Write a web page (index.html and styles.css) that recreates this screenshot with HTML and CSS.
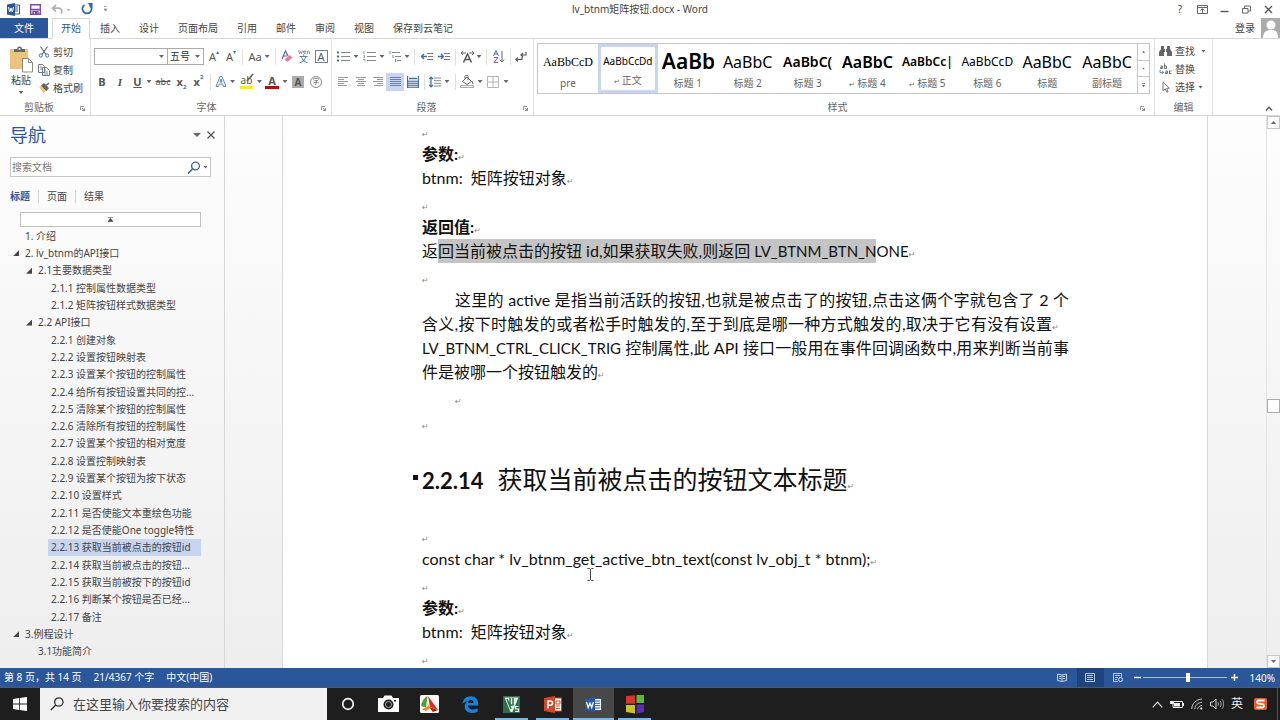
FILE: index.html
```html
<!DOCTYPE html>
<html lang="zh-CN">
<head>
<meta charset="utf-8">
<title>lv_btnm矩阵按钮.docx - Word</title>
<link rel="stylesheet" href="styles.css">
</head>
<body>
<header class="titlebar">
  <div class="quick">
    <svg width="13" height="13" viewBox="0 0 13 13"><path d="M7 2h5.500v9H7z" fill="#fff" stroke="#2b579a"/><path d="M8 4h3M8 6h3M8 8h3" stroke="#2b579a"/><path d="M0 1.500 8 0v13L0 11.500z" fill="#2b579a"/><path d="M1.500 4l1.200 5L4 5l1.300 4L6.500 4" fill="none" stroke="#fff"/></svg>
    <button aria-label="保存"><svg width="11" height="11" viewBox="0 0 11 11"><path d="M.7.7h9.600v9.600H.7zM.7 5.500h9.600M3 10V7.500h5V10" fill="none" stroke="#7d4ba0" stroke-width="1.400"/><path d="M5 8h2v2H5z" fill="#7d4ba0"/></svg></button>
    <button aria-label="撤消"><svg width="20" height="11" viewBox="0 0 20 11"><path d="M5 1 1.500 4.200 5 7.500M2 4.200h5.500c3 0 4 2 3 5.500" fill="none" stroke="#b0b0b0" stroke-width="1.700"/><path d="M15.500 5h4l-2 2z" fill="#b0b0b0"/></svg></button>
    <button aria-label="恢复"><svg width="12" height="12" viewBox="0 0 12 12"><path d="M3.500 2a4.600 4.600 0 1 0 5 0" fill="none" stroke="#2f66b0" stroke-width="1.800"/><path d="M6.500 0h5v5z" fill="#2f66b0"/></svg></button>
    <button aria-label="自定义快速访问工具栏"><svg width="5" height="6" viewBox="0 0 5 6"><path d="M1 .5h3M1 3h3l-1.500 2z" stroke="#888" fill="#888" stroke-width=".7"/></svg></button>
  </div>
  <h1 class="title">lv_btnm矩阵按钮.docx - Word</h1>
  <div class="winbtns">
    <button>?</button>
    <button aria-label="功能区显示选项"><svg width="11" height="9" viewBox="0 0 11 9"><path d="M.5.5h10v8H.500zM.5 2.500h10M5.500 8V4M3.500 5.500l2-2 2 2" fill="none" stroke="#666"/></svg></button>
    <button aria-label="最小化"><svg width="9" height="9" viewBox="0 0 9 9"><path d="M.5 6.500h8" stroke="#555" stroke-width="1.400"/></svg></button>
    <button aria-label="还原"><svg width="9" height="9" viewBox="0 0 9 9"><path d="M.5 3.500h5.500v4.500H.500zM2.500 3V1h6v5H6" fill="none" stroke="#666"/></svg></button>
    <button aria-label="关闭"><svg width="9" height="9" viewBox="0 0 9 9"><path d="M1 1l7 7M8 1 1 8" stroke="#555" stroke-width="1.400"/></svg></button>
  </div>
</header>

<nav class="tabs">
  <button class="file">文件</button>
  <button class="tab on">开始</button>
  <button class="tab">插入</button>
  <button class="tab">设计</button>
  <button class="tab">页面布局</button>
  <button class="tab">引用</button>
  <button class="tab">邮件</button>
  <button class="tab">审阅</button>
  <button class="tab">视图</button>
  <button class="tab">保存到云笔记</button>
  <button class="login">登录</button>
  <svg class="avatar" width="19" height="20" viewBox="0 0 19 20"><path d="M0 0h19v20H0z" fill="#ababab"/><circle cx="10" cy="7" r="4.500" fill="#fff"/><path d="M2 20c0-6 3-8 8-8s7 2 7 8z" fill="#fff"/></svg>
</nav>

<section class="ribbon">
  <div class="group clip">
    <div class="clip-body">
      <button class="paste">
        <svg width="25" height="27" viewBox="0 0 25 27"><path d="M1 3h18v20H1z" fill="#ecc37c"/><path d="M5 6V3h3a2.500 2.500 0 0 1 5 0h3v3z" fill="#666"/><circle cx="10.500" cy="3" r="1" fill="#fff"/><path d="M13.500 12.500h6l4 4v9.500h-10z" fill="#fff" stroke="#888"/><path d="M19.500 12.500v4h4" fill="none" stroke="#888"/></svg>
        <span>粘贴</span><i class="caret"></i>
      </button>
      <div class="stack">
        <button><svg width="12" height="12" viewBox="0 0 12 12"><path d="M2.500.5 8 8.500M9.500.5 4 8.500" stroke="#666" stroke-width="1.200"/><circle cx="2.800" cy="9.500" r="1.600" fill="none" stroke="#4a6ea9"/><circle cx="9.200" cy="9.500" r="1.600" fill="none" stroke="#4a6ea9"/></svg>剪切</button>
        <button><svg width="12" height="12" viewBox="0 0 12 12"><path d="M.5.5h4l2 2v6h-6zM4.500 3.500h4l3 3v5h-7z" fill="#fff" stroke="#777"/><path d="M6 6h2M6 8h4M6 10h4M2 3h2M2 5h2" stroke="#6a8cc0"/></svg>复制</button>
        <button><svg width="12" height="12" viewBox="0 0 12 12"><path d="M1 5l3-1 4 4-2 3.500z" fill="#ecc37c"/><path d="M4 3.500 6 2l4 4-1.500 2zM8 3.500 11 1" fill="#666" stroke="#666" stroke-width="1.500"/></svg>格式刷</button>
      </div>
    </div>
    <div class="glabel">剪贴板<svg class="launch" width="5" height="5" viewBox="0 0 5 5"><path d="M.5 4V.500H4M2 2l2.500 2.500M4.500 2v2.500H2" fill="none" stroke="#777" stroke-width=".8"/></svg></div>
  </div>

  <div class="group font">
    <div class="row f1">
      <div class="combo"><input type="text" aria-label="字体"><i class="caret"></i></div>
      <div class="combo"><select aria-label="字号"><option>五号</option></select><i class="caret"></i></div>
      <button aria-label="增大字号"><span class="ga">A</span><sup>▴</sup></button>
      <button aria-label="减小字号"><span class="ga">A</span><sup>▾</sup></button>
      <i class="sep"></i>
      <button>Aa<i class="caret"></i></button>
      <i class="sep"></i>
      <button aria-label="清除所有格式"><svg width="12" height="13" viewBox="0 0 12 13"><path d="M1 9 4.500 1 7 6M2.500 6h3.500" fill="none" stroke="#5a6f94" stroke-width="1.200"/><path d="M3.500 9.500 8.500 5l3 2.500-5 4.500z" fill="#e8829a"/></svg></button>
      <button aria-label="拼音指南" class="pinyin"><svg width="12" height="4" viewBox="0 0 12 4"><path d="M.5.5l1 3 1-2 1 2 1-3M8 2H5.500c0 2 1.500 1.500 2.300 1.300M8 2C8 .5 5.500.5 5.500 2M9.500 3.800V1h1.200l.8.800v2" fill="none" stroke="#777" stroke-width=".8"/></svg><b>文</b></button>
      <button aria-label="字符边框"><span class="boxed">A</span></button>
    </div>
    <div class="row f2">
      <button class="b">B</button>
      <button class="i">I</button>
      <button class="u">U</button>
      <i class="caret"></i>
      <button class="s">abc</button>
      <button class="b">x<sub>2</sub></button>
      <button class="b">x<sup class="bl">2</sup></button>
      <i class="sep"></i>
      <button aria-label="文本效果"><svg width="12" height="13" viewBox="0 0 12 13"><path d="M1 11.500 5 1.500h2l4 10H8.500l-.8-2.500H4.300l-.8 2.500zM5 7h2L6 4z" fill="#fff" stroke="#5b86c9"/></svg></button>
      <i class="caret"></i>
      <button aria-label="突出显示" class="hl"><span>ab</span><svg width="13" height="12" viewBox="0 0 13 12"><path d="M6 8 12 1" stroke="#666" stroke-width="1.800"/></svg></button>
      <i class="caret"></i>
      <button class="fc">A</button>
      <i class="caret"></i>
      <button><span class="shade">A</span></button>
      <button aria-label="带圈字符"><span class="circ">字</span></button>
    </div>
    <div class="glabel">字体<svg class="launch" width="5" height="5" viewBox="0 0 5 5"><path d="M.5 4V.500H4M2 2l2.500 2.500M4.500 2v2.500H2" fill="none" stroke="#777" stroke-width=".8"/></svg></div>
  </div>

  <div class="group para">
    <div class="row p1">
      <button aria-label="项目符号"><svg width="13" height="11" viewBox="0 0 13 11"><path d="M4 1.500h9M4 5.500h9M4 9.500h9" stroke="#888"/><path d="M0 1.500h2M0 5.500h2M0 9.500h2" stroke="#44679f" stroke-width="2"/></svg></button>
      <i class="caret"></i>
      <button aria-label="编号"><svg width="13" height="11" viewBox="0 0 13 11"><path d="M4 1.500h9M4 5.500h9M4 9.500h9" stroke="#888"/><path d="M1 0v3M.5 4.500h1v2h-1M0 8.500h2v2" fill="none" stroke="#6d88b5" stroke-width=".8"/></svg></button>
      <i class="caret"></i>
      <button aria-label="多级列表"><svg width="13" height="11" viewBox="0 0 13 11"><path d="M3 1.500h8M6 5.500h6M8 9.500h4" stroke="#888"/><path d="M1 0v3M4 4v3M6.500 8v3" stroke="#6d88b5"/></svg></button>
      <i class="caret"></i><i class="sep"></i>
      <button aria-label="减少缩进量"><svg width="12" height="9" viewBox="0 0 12 9"><path d="M6 1.500h6M7 4.500h5M6 7.500h6" stroke="#777"/><path d="M0 4.500h6M3 2 .5 4.500 3 7" fill="none" stroke="#3f6ab5" stroke-width="1.300"/></svg></button>
      <button aria-label="增加缩进量"><svg width="12" height="9" viewBox="0 0 12 9"><path d="M6 1.500h6M7 4.500h5M6 7.500h6" stroke="#777"/><path d="M0 4.500h6M3 2l2.500 2.500L3 7" fill="none" stroke="#3f6ab5" stroke-width="1.300"/></svg></button>
      <i class="sep"></i>
      <button aria-label="中文版式"><svg width="13" height="12" viewBox="0 0 13 12"><path d="M2.500 11.500 6.500 3l4 8.500M4 8.500h5" fill="none" stroke="#555" stroke-width="1.500"/><path d="M0 2h5M2 0 0 2l2 2M8 2h5M11 0l2 2-2 2" fill="none" stroke="#555" stroke-width=".9"/></svg></button>
      <i class="caret"></i><i class="sep"></i>
      <button aria-label="排序"><svg width="12" height="13" viewBox="0 0 12 13"><path d="M.5 6 3 .5 5.500 6M1.500 4h3" fill="none" stroke="#4a6ea9"/><path d="M1 7.500h4L1 12.500h4.300" fill="none" stroke="#7e57a5"/><path d="M9 1v11M6.800 9.500 9 12l2.200-2.500" fill="none" stroke="#666"/></svg></button>
      <i class="sep"></i>
      <button aria-label="显示编辑标记"><svg width="12" height="11" viewBox="0 0 12 11"><path d="M11 1v3H6M8 2 6 4l2 2M7 6v2.500H1M3 6.500.8 8.500 3 10.500" fill="none" stroke="#555" stroke-width="1.200"/></svg></button>
    </div>
    <div class="row p2">
      <button aria-label="左对齐"><svg width="10" height="9" viewBox="0 0 10 9"><path d="M0 .5h10M0 2.500h6M0 4.500h10M0 6.500h6M0 8.500h9" stroke="#999"/></svg></button>
      <button aria-label="居中"><svg width="10" height="9" viewBox="0 0 10 9"><path d="M0 .5h10M2 2.500h6M0 4.500h10M2 6.500h6M1 8.500h8" stroke="#999"/></svg></button>
      <button aria-label="右对齐"><svg width="10" height="9" viewBox="0 0 10 9"><path d="M0 .5h10M4 2.500h6M0 4.500h10M4 6.500h6M1 8.500h9" stroke="#999"/></svg></button>
      <button aria-label="两端对齐" class="sel"><svg width="11" height="10" viewBox="0 0 11 10"><path d="M0 .5h11M0 2.500h11M0 4.500h11M0 6.500h11M0 8.500h11" stroke="#6a7fa5"/></svg></button>
      <button aria-label="分散对齐"><svg width="12" height="12" viewBox="0 0 12 12"><path d="M0 4h12v8H0z" fill="#c3cbd8"/><path d="M.5 0v12M11.500 0v12M2 2.500h8" stroke="#3f6ab5" stroke-width="1.300"/><path d="M1 5.500h10M1 7.500h10M1 9.500h10M1 11.500h10" stroke="#7788a5"/></svg></button>
      <i class="sep"></i>
      <button aria-label="行距"><svg width="12" height="12" viewBox="0 0 12 12"><path d="M5 2h7M5 4.700h7M5 7.300h7M5 10h7" stroke="#888"/><path d="M2 1v10M0 3l2-2 2 2M0 9l2 2 2-2" fill="none" stroke="#3f6ab5" stroke-width="1.200"/></svg></button>
      <i class="caret"></i><i class="sep"></i>
      <button aria-label="底纹"><svg width="14" height="13" viewBox="0 0 14 13"><path d="M2.500 6.500 7 2l4.500 4.500L7 9.500zM5 4V1.500a1.500 1.500 0 0 1 3 0V5M12 6l1 3" fill="none" stroke="#666"/><path d="M.5 10.500h13v2H.500z" fill="#fff" stroke="#aaa"/></svg></button>
      <i class="caret"></i>
      <button aria-label="边框"><svg width="12" height="12" viewBox="0 0 12 12"><path d="M.5.5h11v11H.500zM6 .5v11M.5 6h11" fill="none" stroke="#b5b5b5"/></svg></button>
      <i class="caret"></i>
    </div>
    <div class="glabel">段落<svg class="launch" width="5" height="5" viewBox="0 0 5 5"><path d="M.5 4V.500H4M2 2l2.500 2.500M4.500 2v2.500H2" fill="none" stroke="#777" stroke-width=".8"/></svg></div>
  </div>

  <div class="group styles">
    <div class="gallery">
      <button class="style"><span class="pv serif">AaBbCcD</span><span class="nm">pre</span></button>
      <button class="style cur"><span class="pv s10">AaBbCcDd</span><span class="nm"><em>↵</em>正文</span></button>
      <button class="style"><span class="pv s21 bd">AaBb</span><span class="nm">标题 1</span></button>
      <button class="style"><span class="pv s16">AaBbC</span><span class="nm">标题 2</span></button>
      <button class="style"><span class="pv s14 bd">AaBbC(</span><span class="nm">标题 3</span></button>
      <button class="style"><span class="pv s16 bd">AaBbC</span><span class="nm"><em>↵</em>标题 4</span></button>
      <button class="style"><span class="pv s12 bd">AaBbCc|</span><span class="nm"><em>↵</em>标题 5</span></button>
      <button class="style"><span class="pv s12">AaBbCcD</span><span class="nm">标题 6</span></button>
      <button class="style"><span class="pv s16">AaBbC</span><span class="nm">标题</span></button>
      <button class="style"><span class="pv s16">AaBbC</span><span class="nm">副标题</span></button>
      <div class="gscroll">
        <button aria-label="上一行"><i class="caret up"></i></button>
        <button aria-label="下一行"><i class="caret"></i></button>
        <button aria-label="其他"><i class="caret more"></i></button>
      </div>
    </div>
    <div class="glabel">样式<svg class="launch" width="5" height="5" viewBox="0 0 5 5"><path d="M.5 4V.500H4M2 2l2.500 2.500M4.500 2v2.500H2" fill="none" stroke="#777" stroke-width=".8"/></svg></div>
  </div>

  <div class="group edit">
    <div class="stack">
      <button><svg width="13" height="12" viewBox="0 0 13 12"><path d="M2 1h3v3h3V1h3v3l2 3v4H8V7H5v4H0V7l2-3z" fill="#666"/><path d="M6.500 4v3" stroke="#fff"/></svg>查找<i class="caret"></i></button>
      <button><svg width="13" height="12" viewBox="0 0 13 12"><path d="M1.500 3h2v2.500h-2V4.200h2M5.500.5v5h2V3h-2M6.500 8h2v2.500h-2V9.200h2M12.500 8h-2v2.500h2" fill="none" stroke="#666" stroke-width=".9"/><path d="M1 7v2.500h3M3 8l1.500 1.500L3 11" fill="none" stroke="#4a6ea9" stroke-width=".8"/></svg>替换</button>
      <button><svg width="13" height="12" viewBox="0 0 13 12"><path d="M4 .8v9l2.200-2 1.600 3.500 1.300-.6L7.500 7.300h3z" fill="#fff" stroke="#777"/></svg>选择<i class="caret near"></i></button>
    </div>
    <div class="glabel">编辑</div>
  </div>
  <button class="collapse" aria-label="折叠功能区"><svg width="8" height="5" viewBox="0 0 8 5"><path d="M1 4.500 4 1.200 7 4.500" fill="none" stroke="#555" stroke-width="1.400"/></svg></button>
</section>

<main class="main">
  <aside class="nav">
    <div class="nav-head"><h2>导航</h2><i class="caret big"></i><button aria-label="关闭导航"><svg width="8" height="8" viewBox="0 0 8 8"><path d="M.5.5l7 7M7.500.5l-7 7" stroke="#555" stroke-width="1.300"/></svg></button></div>
    <div class="search"><input type="text" placeholder="搜索文档" aria-label="搜索文档"><svg width="14" height="13" viewBox="0 0 14 13"><circle cx="8.500" cy="5" r="3.900" fill="none" stroke="#3c66ad" stroke-width="1.300"/><path d="M5.500 8 1 12.500" stroke="#3c66ad" stroke-width="1.700"/></svg><i class="caret"></i></div>
    <div class="nav-tabs"><button class="on">标题</button><button>页面</button><button>结果</button></div>
    <button class="top" aria-label="跳转到开头"><svg width="5" height="5" viewBox="0 0 5 5"><path d="M0 .5h5M0 4.500h5L2.500 1.500z" fill="#444" stroke="#444" stroke-width=".6"/></svg></button>
    <ul class="tree">
      <li class="l1">1. 介绍</li>
      <li class="l1 open">2. lv_btnm的API接口</li>
      <li class="l2 open">2.1主要数据类型</li>
      <li class="l3">2.1.1 控制属性数据类型</li>
      <li class="l3">2.1.2 矩阵按钮样式数据类型</li>
      <li class="l2 open">2.2 API接口</li>
      <li class="l3">2.2.1 创建对象</li>
      <li class="l3">2.2.2 设置按钮映射表</li>
      <li class="l3">2.2.3 设置某个按钮的控制属性</li>
      <li class="l3">2.2.4 给所有按钮设置共同的控...</li>
      <li class="l3">2.2.5 清除某个按钮的控制属性</li>
      <li class="l3">2.2.6 清除所有按钮的控制属性</li>
      <li class="l3">2.2.7 设置某个按钮的相对宽度</li>
      <li class="l3">2.2.8 设置控制映射表</li>
      <li class="l3">2.2.9 设置某个按钮为按下状态</li>
      <li class="l3">2.2.10 设置样式</li>
      <li class="l3">2.2.11 是否使能文本重绘色功能</li>
      <li class="l3">2.2.12 是否使能One toggle特性</li>
      <li class="l3 cur">2.2.13 获取当前被点击的按钮id</li>
      <li class="l3">2.2.14 获取当前被点击的按钮...</li>
      <li class="l3">2.2.15 获取当前被按下的按钮id</li>
      <li class="l3">2.2.16 判断某个按钮是否已经...</li>
      <li class="l3">2.2.17 备注</li>
      <li class="l1 open">3.例程设计</li>
      <li class="l2">3.1功能简介</li>
    </ul>
  </aside>
  <div class="work">
    <article class="page">
      <p class="blank ret"></p>
      <p class="ret"><b>参数:</b></p>
      <p class="ret">btnm:&nbsp; 矩阵按钮对象</p>
      <p class="blank ret"></p>
      <p class="ret"><b>返回值:</b></p>
      <p class="ret">返<mark>回当前被点击的按钮 id,如果获取失败,则返回 <span class="id">LV_BTNM_BTN_N</span></mark><span class="id">ONE</span></p>
      <p class="blank ret"></p>
      <p class="just indent">这里的 active 是指当前活跃的按钮,也就是被点击了的按钮,点击这俩个字就包含了 2 个</p>
      <p class="just soft ret">含义,按下时触发的或者松手时触发的,至于到底是哪一种方式触发的,取决于它有没有设置</p>
      <p class="just"><span class="id">LV_BTNM_CTRL_CLICK_TRIG</span> 控制属性,此 API 接口一般用在事件回调函数中,用来判断当前事</p>
      <p class="ret">件是被哪一个按钮触发的</p>
      <p class="blank indent ret"></p>
      <p class="blank ret"></p>
      <h2 class="ret"><b>2.2.14</b>获取当前被点击的按钮文本标题</h2>
      <p class="blank ret"></p>
      <p class="ret">const char * lv_btnm_get_active_btn_text(const lv_obj_t * btnm);</p>
      <p class="blank ret"></p>
      <p class="ret"><b>参数:</b></p>
      <p class="ret">btnm:&nbsp; 矩阵按钮对象</p>
      <p class="blank ret"></p>
    </article>
    <svg class="ibeam" width="7" height="13" viewBox="0 0 7 13"><path d="M.5.5h2l1 1 1-1h2M3.500 1.500v10M.5 12.500h2l1-1 1 1h2" fill="none" stroke="#444"/></svg>
  </div>
  <div class="vscroll">
    <button aria-label="向上滚动"><i class="caret up"></i></button>
    <div class="track"><span class="thumb"></span></div>
    <button aria-label="向下滚动"><i class="caret"></i></button>
  </div>
</main>

<footer class="status">
  <span>第 8 页，共 14 页</span><span>21/4367 个字</span><span>中文(中国)</span>
  <div class="views">
    <button aria-label="阅读视图"><svg width="10" height="9" viewBox="0 0 10 9"><path d="M.5 1 5 2l4.500-1v6.500L5 8.500.5 7.500zM5 2v6.500M2 3.500h2M2 5.500h2M6 3.500h2M6 5.500h2" fill="none" stroke="#c5d4ec"/></svg></button>
    <button aria-label="页面视图" class="on"><svg width="10" height="9" viewBox="0 0 10 9"><path d="M.5.5h9v8h-9zM2 2.500h6M2 4.500h6M2 6.500h6" fill="none" stroke="#b5c8e8"/></svg></button>
    <button aria-label="Web 版式视图"><svg width="10" height="9" viewBox="0 0 10 9"><path d="M5 8.500H.500v-8h8V4M2 2.500h5M2 4.500h3M2 6.500h2" fill="none" stroke="#b5c8e8"/><circle cx="7.500" cy="6.500" r="2" fill="#2b579a" stroke="#dfe8f6"/></svg></button>
  </div>
  <button class="zb" aria-label="缩小"><svg width="7" height="7" viewBox="0 0 7 7"><path d="M0 3.500h7" stroke="#fff" stroke-width="1.400"/></svg></button>
  <input class="zoom" type="range" min="0" max="100" value="54" aria-label="缩放">
  <button class="zb" aria-label="放大"><svg width="7" height="7" viewBox="0 0 7 7"><path d="M0 3.500h7M3.500 0v7" stroke="#fff" stroke-width="1.400"/></svg></button>
  <button class="pct">140%</button>
</footer>

<div class="taskbar">
  <button class="start" aria-label="开始"><svg width="14" height="14" viewBox="0 0 14 14"><path d="M0 2l6-.9v5.500H0zM6.800 1 14 0v6.600H6.800zM0 7.400h6v5.500L0 12zM6.800 7.400H14V14l-7.200-1z" fill="#fff"/></svg></button>
  <div class="tsearch"><svg width="14" height="14" viewBox="0 0 14 14"><circle cx="8.800" cy="5" r="4.200" fill="none" stroke="#333" stroke-width="1.300"/><path d="M5.800 8 .8 13" stroke="#333" stroke-width="1.400"/></svg><input type="text" placeholder="在这里输入你要搜索的内容" aria-label="搜索"></div>
  <div class="apps">
    <button aria-label="Cortana"><svg width="14" height="14" viewBox="0 0 14 14"><circle cx="7" cy="7" r="5.300" fill="none" stroke="#fff" stroke-width="1.700"/></svg></button>
    <button aria-label="相机"><svg width="21" height="18" viewBox="0 0 21 18"><path d="M0 3h5l1.500-2.500h7L15 3h6v14H0z" fill="#fff"/><circle cx="10.500" cy="9.500" r="5" fill="#1e1e1e"/><circle cx="10.500" cy="9.500" r="3" fill="none" stroke="#ccc" stroke-width=".8"/><path d="M16 5h2v1.500h-2z" fill="#1e1e1e"/></svg></button>
    <button aria-label="录屏"><svg width="19" height="18" viewBox="0 0 19 18"><rect width="19" height="18" rx="1.500" fill="#f6f6f4"/><path d="M7.500 1C4 3 1.500 7 1 11l5 1.500z" fill="#48a23c"/><path d="M8 1l10 14-8-3z" fill="#e02c1c"/><path d="M2 14.500l6-3.500-1-4 3 6-4 3z" fill="#f28a1c"/><path d="M9 12l9 3-5 2z" fill="#b81810"/></svg></button>
    <button aria-label="Edge"><svg width="17" height="17" viewBox="0 0 17 17"><path d="M.5 8C1 3 4.500.3 8.800.3c5 0 7.700 3.700 7.500 9.200H6c.2 3 2.500 4 4.800 4 2 0 3.500-.5 4.800-1.300v3.500c-1.500.8-3.300 1.200-5.500 1.200-5 0-7.500-3-7.500-6.500 0-2.500 1.500-4.500 3.500-5.500C3.500 5.500 1.500 6.500.5 8zM6 7h5.500c0-2-1-3.200-2.700-3.200S6.200 5 6 7z" fill="#1783dc"/></svg></button>
    <button class="run" aria-label="VisualGDB"><svg width="17" height="17" viewBox="0 0 17 17"><path d="M0 0h17v17H0z" fill="#2d6e4c"/><path d="M1.500 1.500h14L9.500 16H7.500z" fill="#e8f2ec"/><path d="M4 3l4 10M7 2v7h3V2" fill="none" stroke="#2d6e4c" stroke-width="1.500"/><path d="M15.500 10.500h-3v2.500h3v2.500h-3.500" fill="none" stroke="#fff" stroke-width="1.200"/></svg></button>
    <button class="run" aria-label="PowerPoint"><svg width="18" height="17" viewBox="0 0 18 17"><path d="M10 2h7.500v13H10z" fill="#fff" stroke="#d04727"/><path d="M12 5h4v3h-4zM12 10h4M12 12.500h4" stroke="#d04727" fill="none"/><path d="M0 2l11-2v17L0 15z" fill="#d04727"/><path d="M4 12.500V5h2.500a2 2 0 0 1 0 4.200H4" fill="none" stroke="#fff" stroke-width="1.600"/></svg></button>
    <button class="run cur" aria-label="Word"><svg width="17" height="15" viewBox="0 0 17 15"><path d="M9 1.500h7.500v12H9z" fill="#fff" stroke="#2b579a"/><path d="M10 4h5M10 6.300h5M10 8.600h5M10 11h5" stroke="#2b579a"/><path d="M0 1.800 10 0v15L0 13.200z" fill="#2b579a"/><path d="M1.500 5l1.700 5.500L5 6l1.700 4.500L8.400 5" fill="none" stroke="#fff" stroke-width="1.300"/></svg></button>
    <button class="run" aria-label="桌面工具"><svg width="18" height="19" viewBox="0 0 18 19"><path d="M0 1l9-.8v8.600H0z" fill="#d8362c"/><path d="M10.500 0H18v8h-7.500z" fill="#5cb832"/><path d="M0 10h9v8.500L0 17z" fill="#c9c428"/><path d="M10.500 9.500H18V17l-7.500 1.500z" fill="#5a2cb4"/></svg></button>
  </div>
  <div class="tray">
    <button aria-label="显示隐藏的图标"><svg width="11" height="7" viewBox="0 0 11 7"><path d="M.7 6.300 5.500 1.200l4.800 5.100" fill="none" stroke="#ddd" stroke-width="1.200"/></svg></button>
    <button aria-label="电池"><svg width="14" height="9" viewBox="0 0 14 9"><path d="M3 1.500h9.500v6H3zM13.500 3v3" fill="none" stroke="#eee"/><path d="M4 3h6v3.500H4zM0 1h4v3H0z" fill="#eee"/></svg></button>
    <button aria-label="网络"><svg width="12" height="12" viewBox="0 0 12 12"><path d="M.7 11C1 5.500 5 1.500 11 1M3.700 11.200C4 7.500 7 4.500 11 4.200M6.700 11.200c.2-2 2-3.700 4.300-3.800" fill="none" stroke="#ccc"/><circle cx="10.300" cy="10.500" r="1.100" fill="#fff"/></svg></button>
    <button aria-label="音量"><svg width="14" height="12" viewBox="0 0 14 12"><path d="M.6 4h2.200L6 1v10L2.800 8H.600z" fill="none" stroke="#ddd"/><path d="M8 4.300c.8 1 .8 2.400 0 3.400M10 2.800c1.600 2 1.600 4.400 0 6.400M12 1.200c2.300 3 2.300 6.600 0 9.600" fill="none" stroke="#bbb" stroke-width=".9"/></svg></button>
    <button class="ime">英</button>
    <button aria-label="搜狗输入法"><svg width="13" height="12" viewBox="0 0 13 12"><rect width="13" height="12" rx="2" fill="#ea5a2c"/><path d="M10.500 2.500H4.500c-2 0-2 3 0 3.200l4 .5c2 .3 2 3.300 0 3.300H2.500" fill="none" stroke="#fff" stroke-width="1.800"/></svg></button>
  </div>
</div>
</body>
</html>
```
FILE: styles.css
```css
* { box-sizing: border-box; }
body {
  margin: 0;
  height: 100vh;
  display: flex;
  flex-direction: column;
  overflow: hidden;
  font: 10px/16px "Noto Sans", "Noto Sans CJK SC", sans-serif;
  color: #444;
  background: #fff;
}
button, input, select { font: inherit; color: inherit; border: 0; background: none; padding: 0; margin: 0; border-radius: 0; }
button { display: flex; align-items: center; justify-content: center; white-space: nowrap; }
h1, h2, p, ul { margin: 0; padding: 0; font-weight: normal; }
svg { flex: none; display: block; }
.caret { flex: none; width: 5px; height: 3px; background: #666; clip-path: polygon(0 0, 100% 0, 50% 100%); justify-self: center; align-self: center; }
.caret.up { clip-path: polygon(50% 0, 100% 100%, 0 100%); }
.caret.big { width: 8px; height: 4px; }
.caret.more { height: 5px; clip-path: polygon(0 0, 100% 0, 100% 20%, 0 20%, 0 45%, 100% 45%, 50% 100%, 0 45%); }

/* title bar */
.titlebar { display: grid; grid-template-columns: 1fr auto 1fr; align-items: center; height: 18px; flex: none; }
.quick { display: flex; align-items: center; gap: 10px; padding-left: 7px; }
.title { font-size: 10px; line-height: 18px; }
.winbtns { display: flex; justify-content: flex-end; gap: 12px; padding-right: 7px; }
.winbtns button { width: 10px; }

/* tabs */
.tabs { display: flex; align-items: stretch; height: 21px; flex: none; gap: 1px; border-bottom: 1px solid #d8d8d8; }
.file { width: 48px; background: #2b579a; color: #fff; margin-right: 3px; }
.tab { padding: 0 9px; }
.tab.on { color: #2b579a; background: #fff; border: 1px solid #d8d8d8; border-bottom: 0; padding: 0 8px 2px; height: 21px; }
.login { margin-left: auto; margin-right: 5px; }

/* ribbon */
.ribbon { display: flex; flex: none; height: 77px; border-bottom: 1px solid #d5d5d5; }
.group { display: flex; flex-direction: column; padding-top: 5px; border-right: 1px solid #e2e2e2; }
.glabel { margin-top: auto; display: flex; justify-content: center; position: relative; line-height: 16px; color: #666; }
.launch { position: absolute; right: 5px; bottom: 4px; }
.clip { width: 91px; padding-top: 4px; }
.clip .glabel { padding-right: 12px; }
.clip-body { display: flex; gap: 4px; padding-left: 8px; }
.paste { flex-direction: column; width: 26px; }
.paste span { line-height: 14px; }
.paste .caret { margin-top: 4px; }
.stack { display: flex; flex-direction: column; }
.stack button { height: 18px; gap: 3px; justify-content: flex-start; }
.stack .caret { margin-left: 3px; }
.stack .near { margin-left: 0; }
.clip .stack { height: 54px; }
.row { display: grid; align-items: center; height: 25px; }
.row button { height: 18px; }
.row .sep { width: 1px; height: 16px; background: #e0e0e0; justify-self: center; }
.font { width: 241px; padding-left: 3px; }
.font .row { justify-content: start; color: #555; }
.font .glabel { padding-right: 12px; }
.f1 { grid-template-columns: 73px 38px 18px 16px 7px 26px 7px 16px 17px 18px; }
.f2 { grid-template-columns: 16px 20px 15px 8px 20px 17px 17px 7px 14px 9px 19px 7px 18px 8px 18px 18px; }
.combo { display: flex; align-items: center; height: 17px; border: 1px solid #ababab; padding-right: 3px; margin-right: -1px; }
.combo input { flex: 1; min-width: 0; }
.combo select { flex: 1; appearance: none; padding-left: 2px; color: #333; height: 15px; line-height: 15px; }
.f1 .combo + .combo { margin-right: 1px; }
.f1 button { font-size: 11px; }
.f1 button .caret { margin-left: 3px; }
.f1 sup, .f2 sup, .f2 sub { font-size: 6px; line-height: 8px; color: #3f6ab5; }
.f1 sup { align-self: flex-start; }
.f2 sup.bl { align-self: flex-start; }
.f2 sub { align-self: flex-end; }
.pinyin { flex-direction: column; }
.pinyin b { font-size: 9px; line-height: 10px; font-weight: normal; color: #3f6ab5; }
.boxed { border: 1px solid #6a7fa5; width: 13px; height: 13px; line-height: 11px; }
.b { font-weight: bold; font-size: 11px; }
.i { font: italic bold 11px "Liberation Serif", serif; }
.u { font-weight: bold; text-decoration: underline; font-size: 11px; }
.s { text-decoration: line-through; font-size: 9px; }
.hl { position: relative; flex-direction: column; }
.hl span { width: 13px; line-height: 11px; border-bottom: 3px solid #ffee00; }
.hl svg { position: absolute; left: 4px; top: 0; }
.fc { font-weight: bold; line-height: 11px; font-size: 11px; }
.f2 .fc { width: 14px; height: 14px; border-bottom: 3px solid #d40000; justify-self: center; }
.shade { background: #ababab; width: 12px; height: 12px; line-height: 12px; font-weight: bold; }
.circ { width: 12px; height: 12px; border: 1px solid #888; border-radius: 50%; font-size: 7px; line-height: 10px; }
.para { width: 202px; padding-left: 2px; }
.para .row { justify-content: start; }
.para .glabel { padding-right: 14px; }
.p1 { grid-template-columns: 18px 8px 18px 8px 18px 6px 8px 17px 17px 6px 18px 6px 8px 18px 4px 18px; }
.p2 { grid-template-columns: 18px 17px 17px 18px 17px 7px 14px 10px 6px 18px 8px 18px 8px; }
.sel { background: #c7d5f0; }
.styles { flex: 1; padding: 4px 4px 0 3px; }
.styles .glabel { padding-right: 12px; }
.gallery { display: flex; height: 51px; border: 1px solid #c6c6c6; }
.style { flex: 1 1 0; min-width: 0; flex-direction: column; overflow: hidden; padding: 0 4px; }
.style.cur { border: 3px solid #c7d5f0; padding: 0 1px; }
.pv { height: 30px; line-height: 34px; color: #000; width: 100%; overflow: hidden; text-align: center; }
.nm { line-height: 17px; color: #666; }
.cur .pv { height: 26px; line-height: 28px; }
.nm em { font-style: normal; font-size: 7px; margin-right: 2px; }
.serif { font-family: "Liberation Serif", serif; font-size: 12px; }
.s10 { font-size: 10px; }
.s12 { font-size: 12px; }
.s14 { font-size: 14px; }
.s16 { font-size: 16px; }
.s21 { font-size: 21px; line-height: 32px; }
.bd { font-weight: 600; }
.gscroll { width: 12px; display: flex; flex-direction: column; border-left: 1px solid #c6c6c6; }
.gscroll button { flex: 1; }
.gscroll button + button { border-top: 1px solid #c6c6c6; }
.gscroll .caret { width: 3px; height: 2px; }
.gscroll .caret.more { height: 4px; }
.edit { width: 58px; padding-top: 3px; padding-left: 4px; }
.edit .glabel { padding-right: 4px; }
.collapse { width: 67px; justify-content: flex-end; align-self: flex-end; padding-right: 7px; height: 14px; }

/* work area */
.main { flex: 1; min-height: 0; display: flex; background: linear-gradient(#fdfdfd, #eeeeee); }
.nav { width: 225px; flex: none; border-right: 1px solid #d8d8d8; padding: 7px 13px 8px 10px; display: flex; flex-direction: column; }
.nav-head { display: flex; align-items: center; height: 24px; gap: 6px; }
.nav-head h2 { font-size: 18px; line-height: 24px; color: #2b579a; margin-right: auto; }
.nav-head button { margin-right: -4px; }
.search { display: flex; align-items: center; height: 20px; margin-top: 10px; border: 1px solid #c6c6c6; background: #fff; padding: 0 2px 0 1px; gap: 2px; }
.search input { flex: 1; min-width: 0; }
.search input::placeholder { color: #777; opacity: 1; }
.nav-tabs { display: flex; height: 35px; align-items: center; padding-top: 3px; }
.nav-tabs button { line-height: 13px; }
.nav-tabs button + button { margin-left: 8px; padding-left: 8px; border-left: 1px solid #d5d5d5; }
.nav-tabs .on { color: #2b579a; font-weight: bold; }
.top { height: 15px; margin: 0 10px; border: 1px solid #c0c0c0; background: #fff; }
.tree { flex: 1; list-style: none; display: grid; grid-auto-rows: 1fr; margin-right: 10px; }
.tree li { display: flex; align-items: center; white-space: nowrap; position: relative; line-height: 16px; }
.l1 { margin-left: 12px; padding-left: 3px; }
.l2 { margin-left: 25px; padding-left: 3px; }
.l3 { margin-left: 38px; padding-left: 3px; }
.open::before { content: ""; position: absolute; left: -9px; top: 6px; width: 6px; height: 6px; background: #444; clip-path: polygon(100% 0, 100% 100%, 0 100%); }
.tree .cur { background: #c7d5f0; }
.work { flex: 1; position: relative; overflow: hidden; padding: 0 58px 0 57px; }
.ibeam { position: absolute; left: 362px; top: 452px; }
.page { min-height: 100%; background: #fff; border: solid #d8d8d8; border-width: 0 1px; padding: 1px 138px 0 139px; font: 16px/24px Lato, "Noto Sans CJK SC", sans-serif; color: #111; }
.page p, .page h2 { white-space: nowrap; height: 24px; }
.page p.blank { height: 25px; line-height: 28px; }
.ret::after { content: "↵"; font-family: "DejaVu Sans", sans-serif; font-size: 8px; line-height: 0; font-weight: normal; color: #888; }
.page mark { display: inline-block; height: 24px; background: #c4c4c4; color: inherit; }
.page .indent { padding-left: 33px; }
.page .id { font-size: 15px; }
.just { text-align-last: justify; }
.soft { margin-right: 10px; }
.page h2 { font-size: 25px; line-height: 32px; height: 88px; padding-top: 29px; position: relative; }
.page h2::before { content: ""; position: absolute; left: -9px; top: 41px; width: 5px; height: 5px; background: #111; }
.page h2 b { font-size: 22px; margin-right: 14px; }
.vscroll { width: 14px; flex: none; display: flex; flex-direction: column; border-left: 1px solid #e4e4e4; }
.vscroll button { height: 13px; border: 1px solid #c6c6c6; background: #fff; }
.track { flex: 1; padding-top: 270px; }
.thumb { display: block; height: 14px; border: 1px solid #ababab; background: #fff; }

/* status bar */
.status { display: flex; align-items: center; flex: none; height: 19px; background: #2b579a; color: #fff; padding: 0 5px 0 4px; gap: 12px; }
.status span { padding-bottom: 2px; }
.views { margin-left: auto; display: flex; gap: 1px; align-self: stretch; }
.views button { width: 27px; }
.views .on { background: #1e4480; }
.status .zb { width: 7px; margin-left: -10px; }
.status .zoom { appearance: none; width: 84px; height: 11px; margin-left: -10px; background: linear-gradient(#a9bddd, #a9bddd) center / 100% 1px no-repeat; }
.status .zoom::-webkit-slider-thumb { appearance: none; width: 4px; height: 9px; background: #fff; }
.status .zoom + .zb { margin-left: -8px; }

/* taskbar */
.taskbar { display: flex; flex: none; height: 33px; background: #1e1e1e; color: #eee; border-top: 1px solid #4a5a70; }
.start { width: 40px; }
.tsearch { width: 287px; background: #f1f1f1; display: flex; align-items: center; padding-left: 10px; gap: 9px; }
.tsearch input { flex: 1; font-size: 13px; line-height: 20px; }
.tsearch input::placeholder { color: #444; opacity: 1; }
.apps { display: flex; margin-right: auto; }
.apps button { width: 41px; position: relative; }
.apps .run::after { content: ""; position: absolute; left: 4px; right: 4px; bottom: 0; height: 2px; background: #76b9ed; }
.apps .cur { background: #484848; }
.apps .cur::after { left: 0; right: 0; }
.tray { display: flex; padding-right: 4px; border-right: 1px solid #555; margin-right: 2px; }
.tray button { width: 20px; }
.tray button:last-child { width: 26px; }
.ime { font-size: 12px; }
```
